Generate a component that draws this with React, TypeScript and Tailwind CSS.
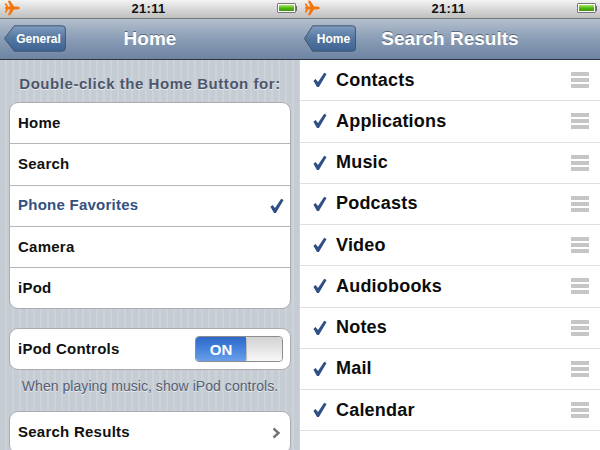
const font = "font-['Liberation_Sans',Arial,sans-serif]";

function Plane() {
  return (
    <svg width="16" height="16" viewBox="0 0 16 16" className="block">
      <path
        d="M0.6 8 C1.5 6.7 3 6.5 6.2 6.5 L3.8 0.8 L6.2 0.8 L10 6.5 L13 6.5 C15 6.6 15.8 7.2 15.8 8 C15.8 8.8 15 9.4 13 9.5 L10 9.5 L6.2 15.2 L3.8 15.2 L6.2 9.5 C3 9.5 1.5 9.3 0.6 8 Z M0.6 3.4 L2.4 3.4 L4 6.2 L2.2 6.9 Z M2.2 9.1 L4 9.8 L2.4 12.6 L0.6 12.6 Z"
        fill="#f2760f"
      />
    </svg>
  );
}

function Battery() {
  return (
    <div className="flex items-center">
      <div className="w-[19px] h-[10px] rounded-[1px] border border-[#777] bg-white p-px">
        <div className="w-full h-full bg-gradient-to-b from-[#a8ea5c] via-[#4fb80f] to-[#3f9c08]" />
      </div>
      <div className="w-px h-[5px] bg-[#666]" />
    </div>
  );
}

function StatusBar() {
  return (
    <div className="relative h-[19px] shrink-0 flex items-center justify-between pl-1 pr-[3px] pb-[2px] bg-gradient-to-b from-[#f3f3f3] to-[#bfbfbf] border-b border-[#777]">
      <Plane />
      <span className="text-[13px] font-bold text-[#111] tracking-[0.3px] leading-none">21:11</span>
      <Battery />
    </div>
  );
}

function NavBar({ back, title, backWidth }: { back: string; title: string; backWidth: string }) {
  return (
    <div className="relative h-[41px] shrink-0 flex items-center justify-center pb-[2px] bg-gradient-to-b from-[#b4bfcd] via-[#8a9db5] to-[#6d84a2] border-b border-[#2d3642]">
      <div className={`absolute left-[4px] top-[6px] h-[27px] ${backWidth}`}>
        <svg width="100%" height="27" className="absolute inset-0" preserveAspectRatio="none" viewBox="0 0 60 27">
          <defs>
            <linearGradient id="backfill" x1="0" y1="0" x2="0" y2="1">
              <stop offset="0" stopColor="#7f9cc0" />
              <stop offset="0.5" stopColor="#54779f" />
              <stop offset="1" stopColor="#3f6596" />
            </linearGradient>
          </defs>
          <path
            d="M0.5 13.5 L10 0.8 L56 0.8 Q59.4 0.8 59.4 4 L59.4 23 Q59.4 26.2 56 26.2 L10 26.2 Z"
            fill="url(#backfill)"
            stroke="#3d4f68"
            strokeWidth="0.9"
            vectorEffect="non-scaling-stroke"
          />
        </svg>
        <span className="relative flex h-full items-center justify-center pl-[7px] text-[12px] font-bold text-white leading-none">
          {back}
        </span>
      </div>
      <span className="text-[19px] font-bold text-white leading-none [text-shadow:0_-1px_0_rgba(50,60,80,0.6)]">
        {title}
      </span>
    </div>
  );
}

function Group({ children, className = "" }: { children: React.ReactNode; className?: string }) {
  return (
    <div className={`mx-[9px] shrink-0 rounded-[9px] border border-[#a9adb2] bg-white overflow-hidden ${className}`}>
      {children}
    </div>
  );
}

function Check({ size = 16 }: { size?: number }) {
  return (
    <svg width={size} height={size} viewBox="0 0 16 16" className="block">
      <path d="M1.4 8.8 L3.6 7 L6 10 L12.2 0.8 L14.6 2 L6.9 15 L5 15 Z" fill="#2f4f85" />
    </svg>
  );
}

function SettingsRow({ label, selected }: { label: string; selected?: boolean }) {
  return (
    <div className="h-[41.25px] flex items-center justify-between pl-[8px] pr-[5px] border-b border-[#b4b6b9] last:h-[40px] last:border-b-0">
      <span className={`text-[15px] font-bold tracking-[0.25px] ${selected ? "text-[#34507f]" : "text-[#111]"}`}>
        {label}
      </span>
      {selected && <Check />}
    </div>
  );
}

function Toggle() {
  return (
    <div className="w-[88px] h-[26px] flex rounded-[4px] overflow-hidden border border-[#8d8d8d]">
      <div className="w-[50px] flex items-center justify-center bg-gradient-to-b from-[#2f68c9] via-[#4683dc] to-[#6b9fe8] text-white text-[15px] font-bold leading-none">
        ON
      </div>
      <div className="flex-1 rounded-[3px] border-l border-[#bbb] bg-gradient-to-b from-[#d2d2d2] to-[#f8f8f8]" />
    </div>
  );
}

function LeftPanel() {
  return (
    <div className="w-[300px] h-[450px] overflow-hidden flex flex-col bg-[#c8ced5] bg-[repeating-linear-gradient(90deg,#c5ccd4_0px,#c5ccd4_5px,#cdd3d9_5px,#cdd3d9_7px)]">
      <StatusBar />
      <NavBar back="General" title="Home" backWidth="w-[62px]" />
      <div className="h-[43px] shrink-0 flex items-center justify-center pt-[6px] mb-[-1px] text-[15px] font-bold tracking-[0.55px] text-[#4c566c] [text-shadow:0_1px_0_rgba(255,255,255,0.6)]">
        Double-click the Home Button for:
      </div>
      <Group>
        <SettingsRow label="Home" />
        <SettingsRow label="Search" />
        <SettingsRow label="Phone Favorites" selected />
        <SettingsRow label="Camera" />
        <SettingsRow label="iPod" />
      </Group>
      <Group className="mt-[19px]">
        <div className="h-[40px] flex items-center justify-between pl-[8px] pr-[7px]">
          <span className="text-[15px] font-bold tracking-[0.25px] text-[#111]">iPod Controls</span>
          <Toggle />
        </div>
      </Group>
      <div className="h-[32px] shrink-0 flex items-center justify-center text-[14px] tracking-[0.05px] text-[#545e73] [text-shadow:0_1px_0_rgba(255,255,255,0.6)]">
        When playing music, show iPod controls.
      </div>
      <Group className="mt-[9px]">
        <div className="h-[41px] flex items-center justify-between pl-[8px] pr-[9px]">
          <span className="text-[15px] font-bold tracking-[0.25px] text-[#111]">Search Results</span>
          <svg width="9" height="12" viewBox="0 0 9 12" className="block">
            <path d="M1.5 1.5 L6.5 6 L1.5 10.5" fill="none" stroke="#737373" strokeWidth="2.4" />
          </svg>
        </div>
      </Group>
    </div>
  );
}

const results = ["Contacts", "Applications", "Music", "Podcasts", "Video", "Audiobooks", "Notes", "Mail", "Calendar"];

function Handle() {
  return (
    <div className="flex flex-col gap-[2px] w-[18px]">
      <div className="h-[4px] bg-[#c6c6c6]" />
      <div className="h-[4px] bg-[#c6c6c6]" />
      <div className="h-[4px] bg-[#c6c6c6]" />
    </div>
  );
}

function RightPanel() {
  return (
    <div className="w-[300px] h-[450px] overflow-hidden flex flex-col bg-white">
      <StatusBar />
      <NavBar back="Home" title="Search Results" backWidth="w-[52px]" />
      {results.map((name) => (
        <div key={name} className="h-[41.25px] shrink-0 flex items-center pl-[12px] pr-[11px] border-b border-[#dfdfdf]">
          <Check />
          <span className="ml-[8px] flex-1 text-[18px] font-bold tracking-[0.2px] text-[#0c0c0c]">{name}</span>
          <Handle />
        </div>
      ))}
    </div>
  );
}

export default function App() {
  return (
    <div className={`w-[600px] h-[450px] overflow-hidden flex ${font}`}>
      <LeftPanel />
      <RightPanel />
    </div>
  );
}
